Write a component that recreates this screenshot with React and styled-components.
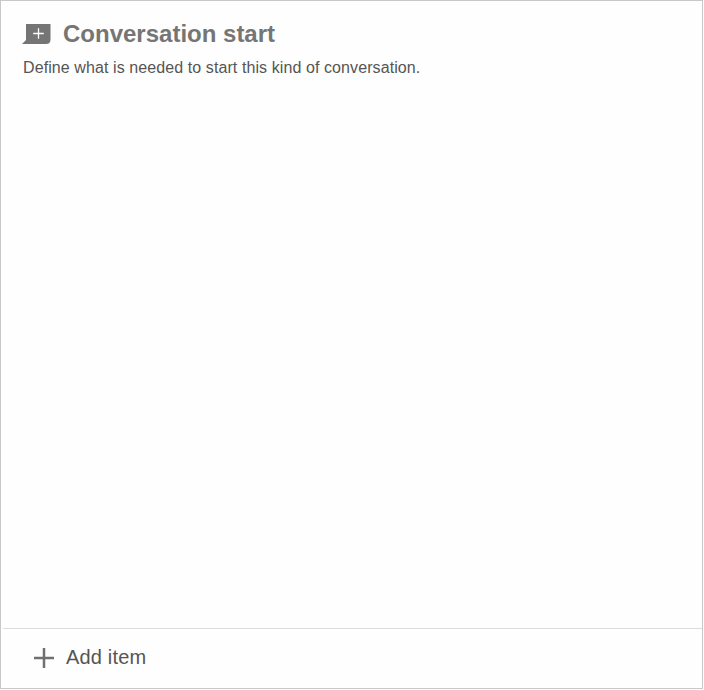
import React from "react";
import styled, { createGlobalStyle } from "styled-components";

const GlobalStyle = createGlobalStyle`
  * { box-sizing: border-box; }
  body { margin: 0; background: #fff; font-family: "Liberation Sans", Arial, sans-serif; }
`;

const Panel = styled.section`
  display: flex;
  flex-direction: column;
  width: 703px;
  height: 689px;
  border: 1px solid #c8c8c8;
  box-shadow: 0 1px 0 #e8e8e8;
  background: #fefefe;
`;

const Header = styled.header`
  flex: 1;
  padding: 18px 21px;
`;

const TitleRow = styled.div`
  display: flex;
  align-items: center;
  height: 30px;
  gap: 12px;
`;

const Title = styled.h1`
  margin: 0;
  font-size: 24px;
  line-height: 30px;
  font-weight: 700;
  color: #757575;
  white-space: nowrap;
`;

const Description = styled.p`
  margin: 9px 0 0 1px;
  font-size: 16px;
  line-height: 20px;
  letter-spacing: 0.09px;
  color: #555;
  white-space: nowrap;
`;

const AddButton = styled.button`
  display: flex;
  align-items: center;
  gap: 12px;
  height: 60px;
  margin: 0 0 0 2px;
  padding: 0 31px 1px;
  border: 0;
  border-top: 1px solid #dcdcdc;
  background: transparent;
  font: 20px/24px "Liberation Sans", Arial, sans-serif;
  letter-spacing: 0.18px;
  color: #555;
`;

const ButtonLabel = styled.span`
  margin-top: -2px;
`;

const BubbleIcon = () => (
  <svg width="29" height="20" viewBox="0 0 29 20" aria-hidden="true">
    <path d="M4 0H28.5V15.5Q28.5 20 24 20H0L4 16Z" fill="#757575" />
    <path d="M16.5 4.2V14.8M11.2 9.5H21.8" stroke="#fff" strokeWidth="1.3" />
  </svg>
);

const PlusIcon = () => (
  <svg width="20" height="20" viewBox="0 0 20 20" aria-hidden="true">
    <path d="M10 0V20M0 10H20" stroke="#707070" strokeWidth="2.5" />
  </svg>
);

export default function App() {
  return (
    <>
      <GlobalStyle />
      <Panel>
        <Header>
          <TitleRow>
            <BubbleIcon />
            <Title>Conversation start</Title>
          </TitleRow>
          <Description>Define what is needed to start this kind of conversation.</Description>
        </Header>
        <AddButton type="button">
          <PlusIcon />
          <ButtonLabel>Add item</ButtonLabel>
        </AddButton>
      </Panel>
    </>
  );
}
